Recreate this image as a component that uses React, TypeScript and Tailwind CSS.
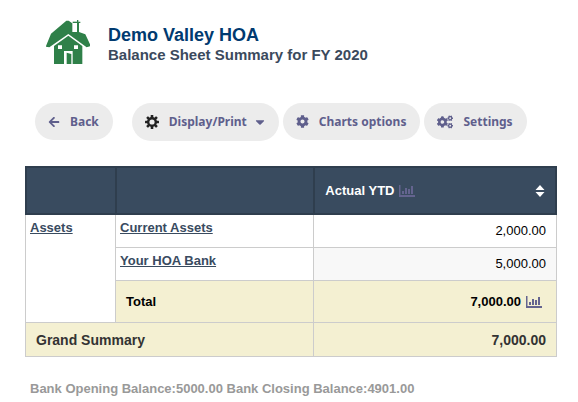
import React from 'react';
import { FaArrowLeft, FaCog, FaCaretDown, FaCogs } from 'react-icons/fa';

const HouseLogo: React.FC = () => (
  <svg viewBox="12 14 132 132" className="w-11 h-11 shrink-0" aria-hidden="true">
    <g fill="#2f8049">
      <path d="M12 92 27 55 73 16H80L91 24V50H105V14H109V19H115V23H111V50L130 57 144 87V93L134 96 79 56 22 96 12 94z" />
      <path d="M36 92 79 61 121 92V146H36z" />
      <path d="M92 19H105V23H92z" />
    </g>
    <path d="M48 90H60V101H48zM96 90H108V101H96zM66 146V107H92V146H88V116L74 112V146z" fill="#fff" />
  </svg>
);

const ChartIcon: React.FC = () => (
  <svg viewBox="0 0 16 12" className="inline-block w-4 h-3 fill-[#64648f]" aria-hidden="true">
    <path d="M0 0H1.5V10H16V12H0zM3 6H5V9H3zM6 3H8V9H6zM9 4H11V9H9zM12 1H14V9H12z" />
  </svg>
);

const SortIcon: React.FC = () => (
  <svg viewBox="0 0 10 12" className="w-[10px] h-3 fill-white" aria-hidden="true">
    <path d="M5 0 9.5 5H.5zM.5 7H9.5L5 12z" />
  </svg>
);

const GearIcon: React.FC = () => (
  <svg viewBox="-7 -7 14 14" className="w-[14px] h-[14px]" aria-hidden="true">
    <g fill="#222">
      {[0, 45, 90, 135].map(angle => (
        <rect key={angle} x="-1.3" y="-7" width="2.6" height="14" rx="0.5" transform={`rotate(${angle})`} />
      ))}
      <circle r="5" />
    </g>
    <circle r="2.6" fill="#ececec" />
  </svg>
);

const pill = 'flex items-center rounded-full bg-[#ececec] pl-[13px] pr-[14px] text-[#5f5f8c] font-["Noto_Sans",sans-serif] text-[12px] leading-5 font-bold whitespace-nowrap';

const accounts = [
  { name: 'Current Assets', amount: '2,000.00', background: 'bg-white' },
  { name: 'Your HOA Bank', amount: '5,000.00', background: 'bg-[#f8f8f8]' },
];

const App: React.FC = () => {
  return (
    <div className="min-h-screen bg-white pt-5 pl-[25px] pr-[21px] font-['Liberation_Sans',Arial,sans-serif]">
      <header className="flex items-start gap-[18px] pl-[21px]">
        <HouseLogo />
        <div className="pt-1">
          <h1 className="text-[18px] leading-[22px] font-bold text-[#003a70]">Demo Valley HOA</h1>
          <h2 className="text-[15px] leading-[18px] font-bold text-[#3b4a5d]">Balance Sheet Summary for FY 2020</h2>
        </div>
      </header>

      <nav className="mt-[39px] flex items-start gap-1 pl-[10px]">
        <button type="button" className={`${pill} h-[37px] mr-[15px]`}>
          <FaArrowLeft className="w-3 h-3 mr-[10px]" />
          Back
        </button>
        <button type="button" className={`${pill} h-[38px]`}>
          <span className="mr-[10px]"><GearIcon /></span>
          Display/Print
          <FaCaretDown className="w-[10px] h-[14px] ml-2" />
        </button>
        <button type="button" className={`${pill} h-[37px]`}>
          <FaCog className="w-[13px] h-[13px] mr-[10px]" />
          Charts options
        </button>
        <button type="button" className={`${pill} h-[37px]`}>
          <FaCogs className="w-4 h-[14px] mr-[10px]" />
          Settings
        </button>
      </nav>

      <table className="mt-[25px] w-full table-fixed border-separate border-spacing-0 text-[13px] leading-4 text-black">
        <colgroup>
          <col className="w-[90px]" />
          <col />
          <col className="w-[45.8%]" />
        </colgroup>
        <thead>
          <tr className="h-[49px] bg-[#394b5f] text-white">
            <th className="border-y-2 border-l-2 border-[#2f3e4e]"></th>
            <th className="border-y-2 border-l-2 border-[#2f3e4e]"></th>
            <th className="border-2 border-[#2f3e4e] px-[10px] text-left">
              <div className="flex items-center">
                <span className="mr-[5px]">Actual YTD</span>
                <ChartIcon />
                <span className="ml-auto"><SortIcon /></span>
              </div>
            </th>
          </tr>
        </thead>
        <tbody>
          {accounts.map((account, index) => (
            <tr key={account.name} className="h-[33px]">
              {index === 0 && (
                <td rowSpan={3} className="border-b border-l border-[#ccc] px-1 pt-[5px] align-top">
                  <a href="#assets" className="font-bold text-[#394b5f] underline">Assets</a>
                </td>
              )}
              <td className="border-b border-l border-[#ccc] px-1 pt-[5px] align-top">
                <a href="#account" className="font-bold text-[#394b5f] underline">{account.name}</a>
              </td>
              <td className={`border-x border-b border-[#ccc] px-[10px] text-right ${account.background}`}>{account.amount}</td>
            </tr>
          ))}
          <tr className="h-[42px] bg-[#f4f0d2] font-bold">
            <td className="border-b border-l border-[#ccc] px-[10px]">Total</td>
            <td className="border-x border-b border-[#ccc] pr-[14px] text-right">
              <div className="flex items-center justify-end gap-[5px]">
                7,000.00
                <ChartIcon />
              </div>
            </td>
          </tr>
          <tr className="h-[34px] bg-[#f4f0d2] text-[14px] font-bold text-[#333]">
            <td colSpan={2} className="border-b border-l border-[#ccc] px-[10px]">Grand Summary</td>
            <td className="border-x border-b border-[#ccc] px-[10px] text-right">7,000.00</td>
          </tr>
        </tbody>
      </table>

      <p className="mt-6 pl-[5px] text-[13px] leading-4 font-bold text-[#999]">
        Bank Opening Balance:5000.00 Bank Closing Balance:4901.00
      </p>
    </div>
  );
};

export default App;
